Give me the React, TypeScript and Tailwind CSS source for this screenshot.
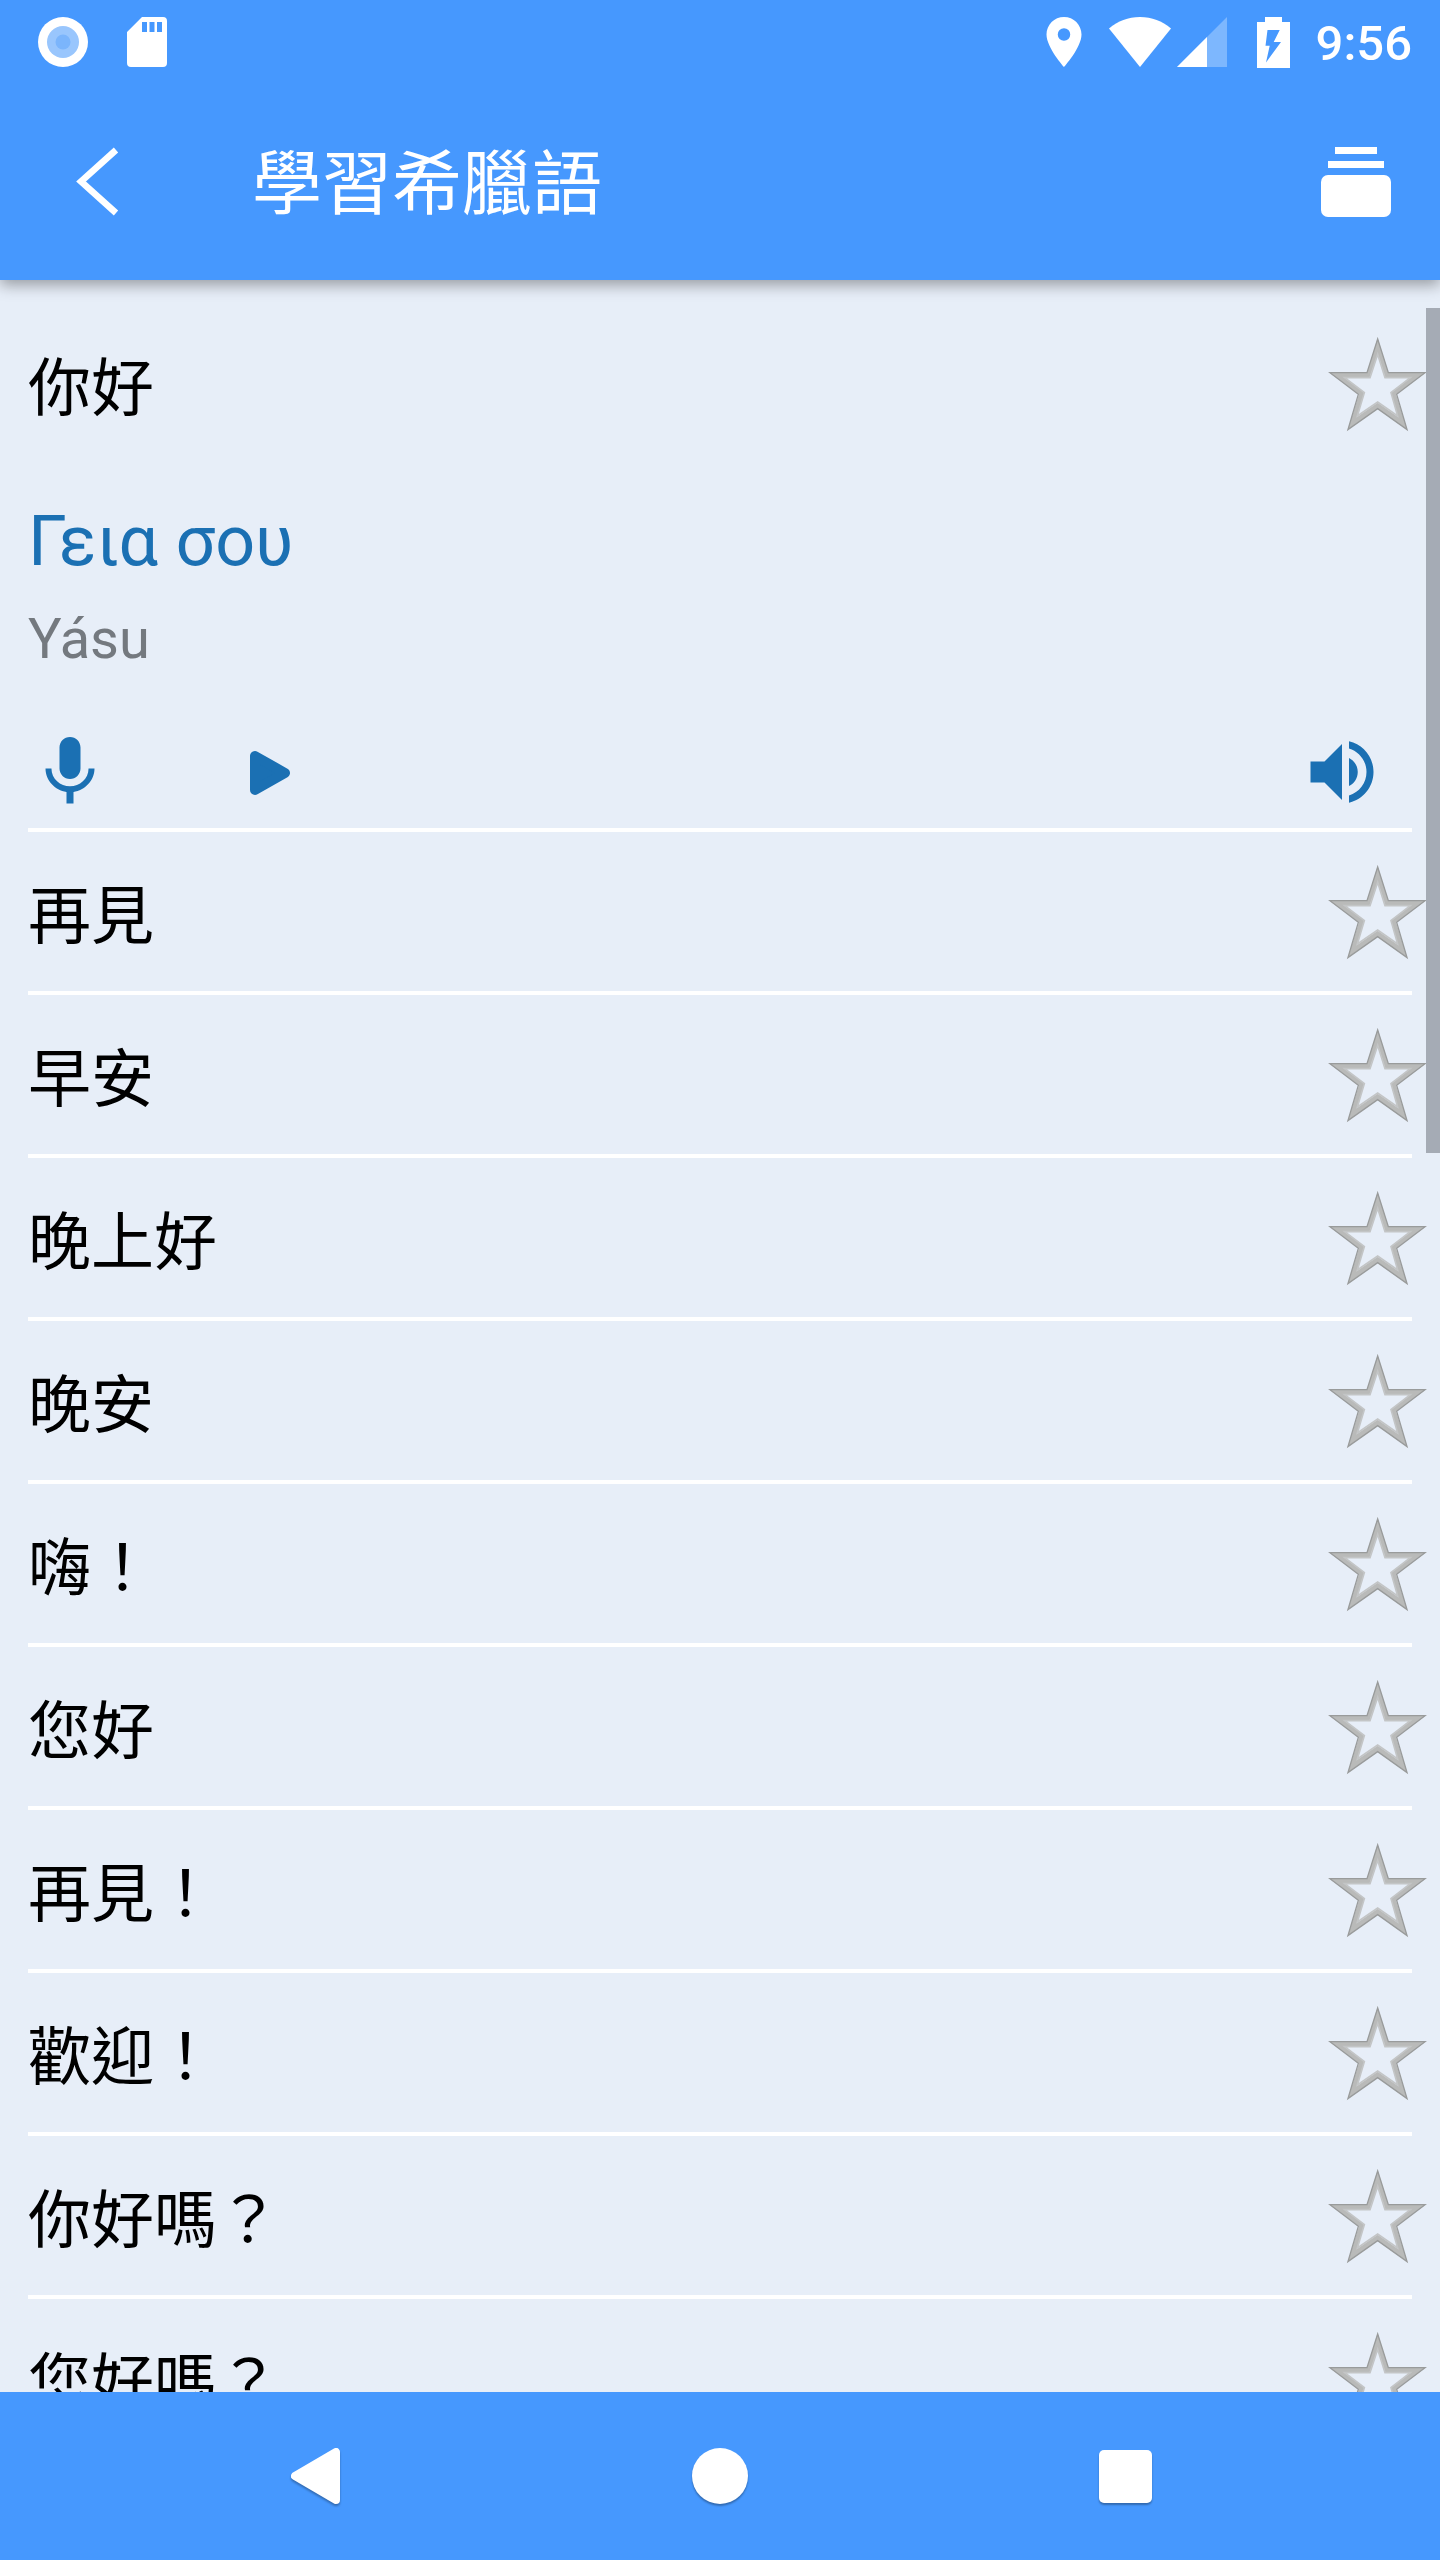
import React, { useState } from "react";

const phrases = [
  { text: "你好", greek: "Γεια σου", latin: "Yásu" },
  { text: "再見" },
  { text: "早安" },
  { text: "晚上好" },
  { text: "晚安" },
  { text: "嗨！" },
  { text: "您好" },
  { text: "再見！" },
  { text: "歡迎！" },
  { text: "你好嗎？" },
  { text: "您好嗎？" },
];

function StatusBar() {
  return (
    <div className="flex h-[84px] shrink-0 items-center justify-between pr-7 pl-[38px] text-white">
      <div className="flex items-center gap-[39px]">
        <svg className="size-[50px]" viewBox="0 0 50 50" aria-hidden="true">
          <circle cx="25" cy="25" r="25" fill="#fff" />
          <circle cx="25" cy="25" r="16" fill="#99c6fd" />
          <circle cx="25" cy="25" r="7.5" fill="#7bb5fc" />
        </svg>
        <svg className="h-[50px] w-10" viewBox="0 0 40 50" fill="currentColor" aria-hidden="true">
          <path
            fillRule="evenodd"
            d="M15 0H36a4 4 0 0 1 4 4V46a4 4 0 0 1-4 4H4a4 4 0 0 1-4-4V15ZM15 5V15h5V5ZM22.500 5V15h5V5ZM30 5V15h5V5Z"
          />
        </svg>
      </div>
      <div className="flex items-center">
        <svg className="h-[50px] w-9" viewBox="4.800 2 14.400 20" fill="currentColor" aria-hidden="true">
          <path
            fillRule="evenodd"
            d="M12 2C8.130 2 5 5.130 5 9c0 5.250 7 13 7 13s7-7.750 7-13c0-3.870-3.130-7-7-7zm0 9.500a2.500 2.500 0 1 1 0-5 2.500 2.500 0 0 1 0 5z"
          />
        </svg>
        <svg className="ml-[27px] h-[50px] w-[62px]" viewBox="0 0 62 50" fill="currentColor" aria-hidden="true">
          <path d="M31 50 0 11.500C9 4 19 0 31 0s22 4 31 11.500Z" />
        </svg>
        <svg className="ml-1.5 size-[50px]" viewBox="0 0 50 50" fill="currentColor" aria-hidden="true">
          <path d="M0 50 50 0V50Z" opacity="0.3" />
          <path d="M0 50 30 20V50Z" />
        </svg>
        <svg className="ml-[30px] h-[51px] w-[33px]" viewBox="0 0 33 51" fill="currentColor" aria-hidden="true">
          <path
            fillRule="evenodd"
            d="M8 0H25V5H33V51H0V5H8ZM10.500 13 8.500 28.700H12.700L9 45.500 24 25H16.700L22.700 13Z"
          />
        </svg>
        <span className="ml-[26px] pt-1 text-[49px] leading-[56px] font-medium">9:56</span>
      </div>
    </div>
  );
}

function Toolbar() {
  return (
    <div className="flex h-[196px] shrink-0 items-center pr-[49px] pl-14 text-white">
      <button type="button" aria-label="返回" className="flex size-[84px] items-center justify-center">
        <svg className="size-[84px]" viewBox="0 0 84 84" fill="none" stroke="currentColor" strokeWidth="6.500" aria-hidden="true">
          <path d="M60 10 25 41.500 60 73" />
        </svg>
      </button>
      <h1 className="ml-28 flex-1 pt-1.5 text-[70px] leading-[84px] font-normal">學習希臘語</h1>
      <button type="button" aria-label="字卡" className="flex size-[70px] items-center justify-center">
        <svg className="size-[70px]" viewBox="0 0 70 70" fill="currentColor" aria-hidden="true">
          <path d="M14 0H56V7H14ZM7 14H63V21H7Z" />
          <rect y="28" width="70" height="42" rx="7" />
        </svg>
      </button>
    </div>
  );
}

function StarIcon() {
  return (
    <svg className="h-[95px] w-[99px]" viewBox="0 0 297 285" aria-hidden="true">
      <path
        fillRule="evenodd"
        fill="#b9bab9"
        d="M149 4 181 107H293L204 172 238 279 149 215 59 279 93 172 4 107H117ZM149 50 125 121H47L109 167 87 240 149 197 210 240 189 167 250 121H172Z"
      />
      <path
        fill="none"
        stroke="#999b9b"
        strokeWidth="4"
        d="M149 6 181 107H291L206 172 237 278 149 215 60 278 91 172 6 107H117Z"
      />
      <path
        fill="none"
        stroke="#c3c5c6"
        strokeWidth="5"
        d="M149 52 126 122H50L109 167 88 237 149 195 209 237 189 167 247 122H171Z"
      />
    </svg>
  );
}

function Phrase({ text, greek, latin }: { text: string; greek?: string; latin?: string }) {
  const [starred, setStarred] = useState(false);
  return (
    <li>
      <div className="flex h-[159px] items-center justify-between pr-[13px] pl-7">
        <span className="pt-2.5 text-[63px] leading-[84px] text-black">{text}</span>
        <button
          type="button"
          aria-label={`收藏 ${text}`}
          aria-pressed={starred}
          onClick={() => setStarred(!starred)}
          className="flex items-center pt-0.5"
        >
          <StarIcon />
        </button>
      </div>
      {greek && (
        <div className="px-7 pt-9 pb-3.5">
          <p className="text-[70px] leading-[84px] text-[#1b70b3]">{greek}</p>
          <p className="mt-6 text-[56px] leading-[64px] text-[#74797f]">{latin}</p>
          <div className="mt-[59px] flex items-center pr-7 text-[#1b70b3]">
            <button type="button" aria-label="錄音">
              <svg className="size-[84px]" viewBox="0 0 24 24" fill="currentColor" aria-hidden="true">
                <path d="M12 14c1.660 0 3-1.340 3-3V5c0-1.660-1.340-3-3-3S9 3.340 9 5v6c0 1.660 1.340 3 3 3zm5.300-3c0 3-2.540 5.100-5.300 5.100S6.700 14 6.700 11H5c0 3.410 2.720 6.230 6 6.720V21h2v-3.280c3.280-.48 6-3.300 6-6.720h-1.700z" />
              </svg>
            </button>
            <button type="button" aria-label="播放" className="ml-[116px]">
              <svg className="size-[84px]" viewBox="0 0 84 84" fill="currentColor" stroke="currentColor" strokeWidth="10" strokeLinejoin="round" aria-hidden="true">
                <path d="M27 26V60L57 43Z" />
              </svg>
            </button>
            <button type="button" aria-label="朗讀" className="ml-auto">
              <svg className="size-[84px]" viewBox="0 0 24 24" fill="currentColor" aria-hidden="true">
                <path d="M3 9v6h4l5 5V4L7 9H3zm13.500 3c0-1.770-1.020-3.290-2.500-4.030v8.050c1.480-.73 2.500-2.250 2.500-4.020zM14 3.230v2.060c2.890.86 5 3.540 5 6.710s-2.110 5.850-5 6.710v2.060c4.010-.91 7-4.490 7-8.770s-2.990-7.860-7-8.770z" />
              </svg>
            </button>
          </div>
        </div>
      )}
      <div className="mx-7 h-1 bg-white" />
    </li>
  );
}

function NavBar() {
  return (
    <nav className="flex h-[168px] shrink-0 items-center bg-[#4698fe] px-28 text-white">
      <button type="button" aria-label="上一頁" className="flex flex-1 justify-center">
        <svg className="size-[60px] drop-shadow-[0_2px_1px_rgba(0,0,0,0.3)]" viewBox="0 0 60 60" fill="currentColor" stroke="currentColor" strokeWidth="8" strokeLinejoin="round" aria-hidden="true">
          <path d="M51 6V54L10 30Z" />
        </svg>
      </button>
      <button type="button" aria-label="主畫面" className="flex flex-1 justify-center">
        <span className="size-14 rounded-full bg-white shadow-[0_2px_2px_rgba(0,0,0,0.3)]" />
      </button>
      <button type="button" aria-label="最近使用" className="flex flex-1 justify-center">
        <span className="size-[53px] rounded-[5px] bg-white shadow-[0_2px_2px_rgba(0,0,0,0.3)]" />
      </button>
    </nav>
  );
}

export default function App() {
  return (
    <div className="flex h-screen flex-col bg-[#e7eef8] font-[Roboto,'Noto_Sans_CJK_TC',sans-serif]">
      <header className="relative z-10 bg-[#4698fe] shadow-[0_5px_14px_rgba(0,0,0,0.35)]">
        <StatusBar />
        <Toolbar />
      </header>
      <main className="relative min-h-0 flex-1">
        <ul className="h-full overflow-y-auto pt-6 [scrollbar-width:none]">
          {phrases.map((p) => (
            <Phrase key={p.text} {...p} />
          ))}
        </ul>
        <div className="absolute top-7 right-0 h-2/5 w-3.5 bg-[#a5abb5]" />
      </main>
      <NavBar />
    </div>
  );
}
